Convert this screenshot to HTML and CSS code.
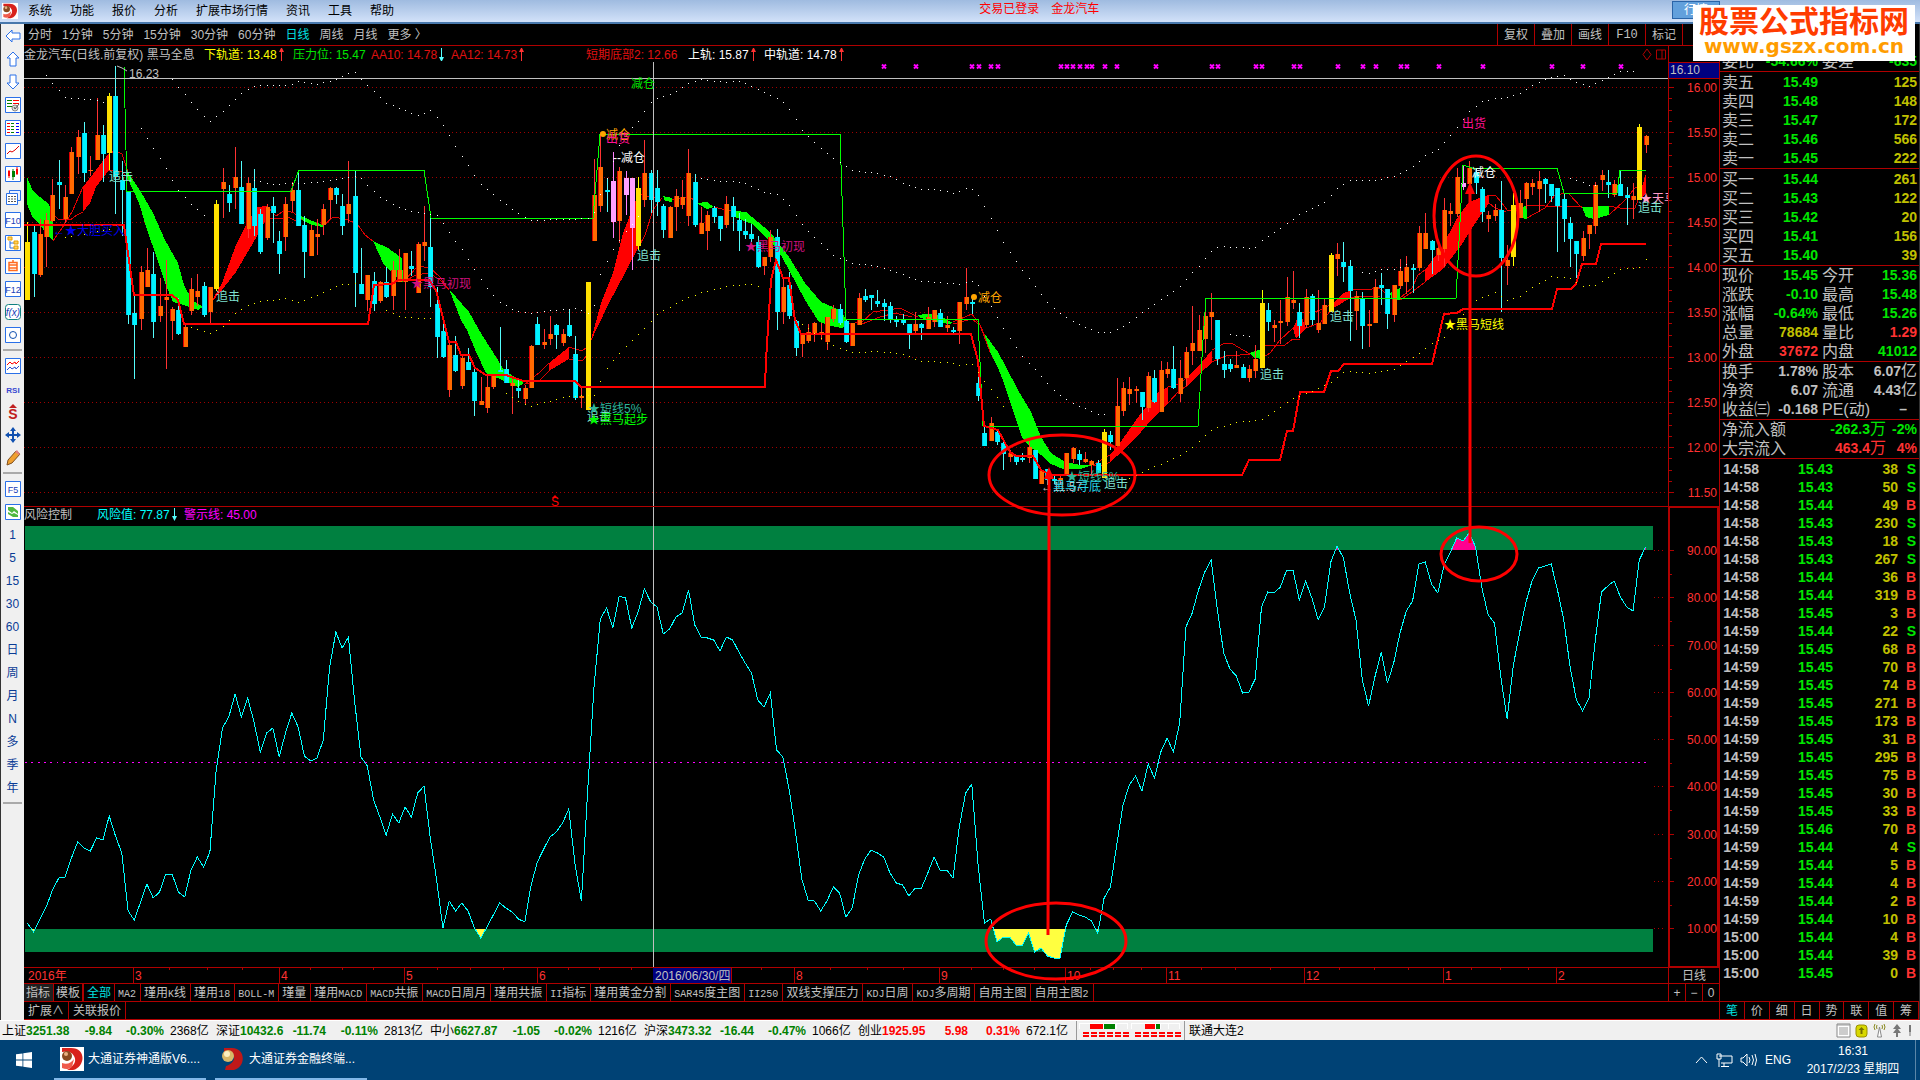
FILE: index.html
```html
<!DOCTYPE html>
<html lang="zh-CN">
<head>
  <meta charset="UTF-8">
  <title>金龙汽车 日线</title>
  <link rel="stylesheet" href="styles.css">
</head>
<body>
  <header class="menubar">
    <svg class="logo" viewBox="0 0 24 24"><rect width="24" height="24" fill="#fff"/><path d="M2 1h9c16 0 14 19 2 22H7c7-4 10-9 7-14C11 4 7 4 2 5z" fill="#d8221c"/><path d="M2 16c5 2 9 0 12-4l-2 8c-4 3-7 2-10 1z" fill="#ef5a4c"/><circle cx="7" cy="9" r="5" fill="#8a4a20"/><circle cx="6" cy="7" r="2" fill="#e8b080"/></svg>
    <nav class="menus">
      <button>系统</button><button>功能</button><button>报价</button><button>分析</button><button>扩展市场行情</button><button>资讯</button><button>工具</button><button>帮助</button>
    </nav>
    <div class="login"><span>交易已登录</span><span>金龙汽车</span></div>
    <button class="market">行情</button>
  </header>

  <main class="main">
    <aside class="toolbar" id="toolbar"></aside>

    <section class="center">
      <div class="periods">
        <button>分时</button><button>1分钟</button><button>5分钟</button><button>15分钟</button><button>30分钟</button><button>60分钟</button><button class="on">日线</button><button>周线</button><button>月线</button><button>更多 〉</button>
        <div class="tools">
          <button>复权</button><button>叠加</button><button>画线</button><button class="en">F10</button><button>标记</button><button>—</button>
        </div>
      </div>

      <div class="chart">
        <svg id="chart" viewBox="24 46 1695 937" preserveAspectRatio="none"></svg>
        <div class="legend">
          <span>金龙汽车(日线.前复权) 黑马全息</span>
          <span class="yellow">下轨道: 13.48<i class="up"></i></span>
          <span class="lime">压力位: 15.47</span>
          <span class="red">AA10: 14.78<i class="down"></i></span>
          <span class="red">AA12: 14.73<i class="up"></i></span>
          <span class="red">短期底部2: 12.66</span>
          <span class="white">上轨: 15.87<i class="up"></i></span>
          <span class="white">中轨道: 14.78<i class="up"></i></span>
        </div>
      </div>

      <div class="tabs">
        <button class="first">指标</button><button class="second">模板</button><button class="on">全部</button><button><b>MA2</b></button><button>瑾用<b>K</b>线</button><button>瑾用<b>18</b></button><button><b>BOLL-M</b></button><button>瑾量</button><button>瑾用<b>MACD</b></button><button><b>MACD</b>共振</button><button><b>MACD</b>日周月</button><button>瑾用共振</button><button><b>II</b>指标</button><button>瑾用黄金分割</button><button><b>SAR45</b>度主图</button><button><b>II250</b></button><button>双线支撑压力</button><button><b>KDJ</b>日周</button><button><b>KDJ</b>多周期</button><button>自用主图</button><button>自用主图<b>2</b></button>
        <div class="zoom"><button>+</button><button>−</button><button>0</button></div>
      </div>
      <div class="tabs last"><button>扩展∧</button><button>关联报价</button></div>
    </section>

    <aside class="side">
      <div class="stock">600686 金龙汽车</div>
      <table class="quote"><tr><td>委比</td><td class="lime">-54.66%</td><td>委差</td><td class="lime">-635</td></tr></table>
      <table class="quote book" id="asks"></table>
      <table class="quote book" id="bids"></table>
      <table class="quote">
        <tr><td>现价</td><td class="lime">15.45</td><td>今开</td><td class="lime">15.36</td></tr>
        <tr><td>涨跌</td><td class="lime">-0.10</td><td>最高</td><td class="lime">15.48</td></tr>
        <tr><td>涨幅</td><td class="lime">-0.64%</td><td>最低</td><td class="lime">15.26</td></tr>
        <tr><td>总量</td><td class="gold">78684</td><td>量比</td><td class="red">1.29</td></tr>
        <tr><td>外盘</td><td class="red">37672</td><td>内盘</td><td class="lime">41012</td></tr>
      </table>
      <table class="quote">
        <tr><td>换手</td><td>1.78%</td><td>股本</td><td>6.07<em>亿</em></td></tr>
        <tr><td>净资</td><td>6.07</td><td>流通</td><td>4.43<em>亿</em></td></tr>
        <tr><td>收益㈢</td><td>-0.168</td><td>PE(动)</td><td class="dash">–</td></tr>
      </table>
      <table class="quote flow">
        <tr><td>净流入额</td><td class="lime">-262.3<em>万</em></td><td class="lime">-2%</td></tr>
        <tr><td>大宗流入</td><td class="red">463.4<em>万</em></td><td class="red">4%</td></tr>
      </table>
      <table class="ticks" id="ticks"></table>
      <div class="sidetabs"><button class="on">笔</button><button>价</button><button>细</button><button>日</button><button>势</button><button>联</button><button>值</button><button>筹</button></div>
    </aside>
  </main>

  <footer class="status">
    <div class="index down"><span>上证</span><b>3251.38</b><b>-9.84</b><b>-0.30%</b><span>2368亿</span></div>
    <div class="index down"><span>深证</span><b>10432.6</b><b>-11.74</b><b>-0.11%</b><span>2813亿</span></div>
    <div class="index down"><span>中小</span><b>6627.87</b><b>-1.05</b><b>-0.02%</b><span>1216亿</span></div>
    <div class="index down"><span>沪深</span><b>3473.32</b><b>-16.44</b><b>-0.47%</b><span>1066亿</span></div>
    <div class="index rise"><span>创业</span><b>1925.95</b><b>5.98</b><b>0.31%</b><span>672.1亿</span></div>
    <div class="meters">
      <svg width="102" height="14" viewBox="0 0 102 14" shape-rendering="crispEdges">
        <path d="M0 0h49v6H0zM52 0h49v6H52z" fill="#fff"/><path d="M1 1h10v5H1zM38 1h10v5H38zM53 1h13v5H53zM82 1h7v5h-7zM90 1h10v5H90z" fill="#f0f0f0"/>
        <path d="M11 1h13v5H11zM66 1h10v5H66z" fill="red"/><path d="M25 1h11v5H25zM77 1h4v5h-4z" fill="green"/>
        <path d="M4 9.500h47M4 12.500h47M56 9.500h46M56 12.500h46" stroke="red" stroke-width="2" stroke-dasharray="6 2"/>
      </svg>
    </div>
    <span class="server">联通大连2</span>
    <svg class="stateicons" width="80" height="16" viewBox="0 0 80 16">
      <path d="M1 1h13v13H1z" fill="#fff" stroke="#888"/><path d="M1 2h13M3 5h9M3 7h9M3 9h9M3 11h9" stroke="#999"/>
      <rect x="20" y="2" width="11" height="12" rx="3" fill="#d8d800" stroke="#998f00"/><path d="M25.500 4l3 3h-2v4h-2V7h-2z" fill="#776f00"/>
      <path d="M39 1q-2 3 0 6M48 1q2 3 0 6M41 2q-1 2 0 4M46 2q1 2 0 4" fill="none" stroke="#8a8a20"/><path d="M43.500 4l-2 10h4z" fill="#fff" stroke="#888"/>
      <path d="M61 1l4 5h-3l3 4h-3v4h-2v-4h-3l3-4h-3z" fill="#777"/><path d="M73 2h2v7h-2zM73.500 9h1v4h-1z" fill="#777"/>
    </svg>
  </footer>

  <footer class="taskbar">
    <button class="start" aria-label="开始"><svg width="16" height="16" viewBox="0 0 16 16" fill="#fff"><path d="M0 2.300L6.500 1.400v6.200H0zM7.300 1.300L16 0v7.600H7.300zM0 8.400h6.500v6.200L0 13.700zM7.300 8.400H16V16l-8.700-1.300z"/></svg></button>
    <button class="task"><svg width="24" height="24" viewBox="0 0 24 24"><rect width="24" height="24" fill="#fff"/><path d="M2 1h9c16 0 14 19 2 22H7c7-4 10-9 7-14C11 4 7 4 2 5z" fill="#d8221c"/><path d="M2 16c5 2 9 0 12-4l-2 8c-4 3-7 2-10 1z" fill="#ef5a4c"/><circle cx="7" cy="9" r="5" fill="#8a4a20"/><circle cx="6" cy="7" r="2" fill="#e8b080"/></svg>大通证券神通版V6....</button>
    <button class="task"><svg width="24" height="24" viewBox="0 0 24 24"><path d="M3 1h8c14 0 14 19 2 22H4l1-4c7-2 10-8 7-12C10 4 7 4 3 5z" fill="#c01818"/><circle cx="7" cy="9" r="6" fill="#d8b868"/><circle cx="6" cy="7" r="3" fill="#fbf0c0"/></svg>大通证券金融终端...</button>
    <div class="tray">
      <svg width="62" height="18" viewBox="0 0 62 18" fill="none" stroke="#fff">
        <path d="M1 12l5.500-6 5.500 6"/><path d="M24 5h13v7H26M22 3h4v5h-4zM24 8v8M29 12v3M26 15.500h8"/>
        <path d="M46 7h2l4-4v12l-4-4h-2zM54 6q2 3 0 6M57 4q3 5 0 10M60 3q3 6 0 12"/>
      </svg>
      <span>ENG</span>
      <div class="clock"><div>16:31</div><div>2017/2/23 星期四</div></div>
      <div class="desktop"></div>
    </div>
  </footer>

  <div class="banner"><div class="name">股票公式指标网</div><div class="url">www.gszx.com.cn</div></div>
  <script src="script.js"></script>
</body>
</html>
```
FILE: styles.css
```css
* { box-sizing: border-box; }
body {
  margin: 0;
  height: 100vh;
  display: flex;
  flex-direction: column;
  overflow: hidden;
  background: #000;
  color: #c0c0c0;
  font: 12px/16px "Liberation Sans", "Noto Sans CJK SC", sans-serif;
}
button {
  margin: 0;
  padding: 0;
  border: 0;
  background: none;
  color: inherit;
  font: inherit;
  white-space: nowrap;
}
.red { color: #ff3232; }
.lime { color: #00e600; }
.yellow { color: #ff0; }
.gold { color: #c0c000; }
.white { color: #fff; }
.on { color: #00e0e0; }

/* top menu */
.menubar {
  height: 24px;
  display: flex;
  align-items: flex-start;
  background: linear-gradient(#9fbbe0, #d0e0f8 21px);
  border-bottom: 2px solid #4878ac;
  color: #000;
  position: relative;
}
.logo { width: 16px; height: 18px; margin: 2px 0 0 2px; }
.menus { display: flex; gap: 18px; margin: 3px 0 0 10px; }
.login {
  position: absolute;
  left: 51%;
  top: 1px;
  display: flex;
  gap: 12px;
  color: #f00;
}
.market {
  margin: 1px 200px 0 auto;
  width: 48px;
  height: 18px;
  background: #62a0dc;
  border: 1px solid #2a64a8;
  color: #fff;
}

.main { flex: 1; min-height: 0; display: flex; }

/* left toolbar */
.toolbar {
  width: 24px;
  flex: none;
  background: #f0f0f0;
  border-left: 1px solid #333;
  display: flex;
  flex-direction: column;
}
.toolbar button {
  height: 23px;
  flex: none;
  display: flex;
  align-items: center;
  justify-content: center;
  color: #0a3c96;
}
.toolbar hr {
  width: 19px;
  height: 2px;
  flex: none;
  margin: 3px auto;
  border: 0;
  background: #aaa;
}

/* centre */
.center {
  flex: 1;
  min-width: 0;
  display: flex;
  flex-direction: column;
}
.periods {
  height: 22px;
  flex: none;
  display: flex;
  gap: 10px;
  padding-left: 4px;
  border-bottom: 1px solid #b00000;
}
.tools { margin-left: auto; display: flex; }
.tools button { width: 37px; border-left: 1px solid #b00000; }
.en, .tabs b { font: 10px "Liberation Mono", monospace; }
.tools .en { font-size: 12px; }
.chart { flex: 1; min-height: 0; position: relative; }
.chart svg { display: block; width: 100%; height: 100%; }
.chart text { font: 12px "Liberation Sans", "Noto Sans CJK SC", sans-serif; }
.legend {
  position: absolute;
  left: 0;
  top: 1px;
  display: grid;
  grid-template-columns: 180px 89px 78px 80px 135px 102px 76px 100px;
  white-space: nowrap;
}
.legend .red { color: #e01010; }
.legend i {
  display: inline-block;
  width: 5px;
  height: 13px;
  margin-left: 2px;
  vertical-align: -2px;
  background: linear-gradient(#ff3232, #ff3232) center / 1px 100% no-repeat;
}
.legend i::before {
  content: "";
  display: block;
  border: 2px solid transparent;
  border-top: 0;
  border-bottom: 4px solid #ff3232;
}
.legend .down { background-image: linear-gradient(#5ff, #5ff); padding-top: 9px; }
.legend .down::before { border-bottom: 0; border-top: 4px solid #5ff; }

.tabs {
  height: 18px;
  flex: none;
  display: flex;
  border-top: 1px solid #b00000;
}
.tabs button {
  padding: 0 3px;
  border-right: 1px solid #b00000;
}
.tabs button:nth-child(n+4) { padding-right: 4px; }
.tabs .first { background: #202020; padding: 0 3px 0 2px; }
.tabs .second { padding: 0 2px; border-right-width: 2px; }
.tabs.last { height: 19px; border-bottom: 1px solid #b00000; }
.last button { padding: 0 4px; }
.zoom {
  margin-left: auto;
  width: 51px;
  display: flex;
  border-left: 1px solid #b00000;
}
.zoom button { flex: 1; }
.zoom button:last-child { border-right: 0; }

/* quote panel */
.side {
  width: 201px;
  flex: none;
  display: flex;
  flex-direction: column;
  border-left: 1px solid #b00000;
  border-right: 1px solid #333;
}
.stock { height: 28px; padding: 4px; }
table { border-collapse: collapse; }
.quote {
  width: 199px;
  table-layout: fixed;
  border-bottom: 1px solid #b00000;
  font-size: 16px;
}
.quote td {
  height: 19px;
  padding: 0 0 0 2px;
  line-height: 19px;
  white-space: nowrap;
}
.quote td:last-child { padding-right: 2px; }
.book { margin-top: 1px; }
.quote td:nth-child(1) { width: 34px; }
.quote td:nth-child(2) { width: 64px; }
.quote td:nth-child(3) { width: 36px; padding-left: 4px; }
.quote td:nth-child(even),
.book td:nth-child(3),
.flow td:nth-child(3) {
  font: bold 14px/19px "Liberation Sans", "Noto Sans CJK SC", sans-serif;
  text-align: right;
}
.book td:nth-child(3) { width: auto; }
.quote td.dash { padding-right: 12px; }
.flow td:nth-child(1) { width: 70px; }
.flow td:nth-child(2) { width: 96px; }
.flow td:nth-child(3) { width: auto; }
.quote em { font: 16px/0 "Noto Sans CJK SC", sans-serif; }
.ticks { width: 196px; font: bold 14px/18px "Liberation Sans", sans-serif; margin-top: 1px; }
.ticks td { height: 18px; padding: 0; text-align: right; }
.ticks td:nth-child(1) { width: 39px; }
.ticks td:nth-child(2) { width: 74px; }
.ticks td:nth-child(3) { width: 65px; }
.sidetabs {
  height: 19px;
  margin-top: auto;
  display: flex;
  border: 1px solid #b00000;
  border-left: 0;
}
.sidetabs button { flex: 1; }
.sidetabs button + button { border-left: 1px solid #b00000; }

/* index strip */
.status {
  height: 20px;
  flex: none;
  display: flex;
  align-items: center;
  padding-left: 2px;
  background: #f0f0f0;
  border-top: 1px solid #fff;
  color: #000;
}
.index {
  display: grid;
  grid-template-columns: 24px 50px 36px 52px 52px;
  white-space: nowrap;
}
.index b:nth-child(n+3) { text-align: right; }
.index span:last-child { padding-left: 6px; }
.status .down b { color: #008000; }
.status .rise b { color: #f00; }
.meters {
  width: 109px;
  height: 19px;
  margin-left: 4px;
  padding: 2px 0 0 2px;
  border-left: 1px solid #999;
  border-right: 1px solid #999;
}
.server { margin-left: 4px; }
.stateicons { margin: 0 4px 0 auto; }

/* desktop taskbar */
.taskbar {
  height: 40px;
  flex: none;
  display: flex;
  background: #004275;
  color: #fff;
}
.start { width: 48px; }
.start svg { display: block; margin: auto; }
.task {
  width: 152px;
  margin-left: 6px;
  padding-left: 6px;
  display: flex;
  align-items: center;
  gap: 4px;
  border-bottom: 2px solid #82b8e8;
}
.task + .task { margin-left: 9px; }
.tray {
  margin-left: auto;
  display: flex;
  align-items: center;
  gap: 8px;
}
.clock { width: 108px; text-align: center; line-height: 18px; }
.desktop { width: 5px; height: 40px; border-left: 1px solid #5a86a8; }

.banner {
  position: absolute;
  top: 5px;
  right: 5px;
  width: 222px;
  height: 56px;
  background: #fff;
  text-align: center;
  font-weight: bold;
  white-space: nowrap;
}
.name { font-size: 30px; line-height: 33px; color: #ff3c00; }
.url { font: bold 20px/16px "DejaVu Sans", sans-serif; color: #ff9c00; }
```
FILE: script.js
```js
// One candle per trading day: type high open-close-top open-close-bottom low
// o = up, c = down, y = chase signal, p = sell signal
const candles = `
y 222 242 300 300|c 224 232 274 297|o 219 234 275 277|o 213 220 237 267|o 179 195 221 222|c 160 182 185 209|o 185 197 219 223|o 147 152 194 194
o 130 137 157 174|c 122 133 173 182|o 156 170 171 176|o 98 135 160 160|c 125 135 154 182|y 93 96 153 170|c 66 96 177 214|c 161 180 190 236
c 191 191 315 324|c 295 313 325 379|o 266 272 319 330|o 248 270 287 287|c 252 274 322 338|o 278 306 316 322|o 260 297 300 369|o 307 309 321 340
c 298 310 334 335|o 325 327 347 347|o 278 289 311 315|o 274 291 297 306|c 282 286 315 317|o 287 287 312 323|y 200 204 289 291|o 168 182 189 218
c 185 194 203 212|o 147 177 188 209|c 161 187 224 224|o 177 183 229 238|c 169 188 226 236|c 209 214 252 254|o 204 207 238 240|c 197 206 213 243
c 231 241 254 274|o 197 204 237 251|o 182 190 201 212|c 171 190 226 226|c 216 225 252 278|o 225 230 256 256|o 219 234 237 255|o 204 209 225 235
o 187 188 200 219|c 187 188 195 204|c 194 206 226 235|o 161 204 214 223|c 170 196 273 307|c 248 284 294 294|o 275 275 300 311|c 272 281 304 311
o 281 282 301 303|c 267 282 297 298|o 261 270 296 310|o 249 270 282 282|o 253 253 282 310|c 251 266 269 276|o 242 244 293 293|o 206 242 246 261
c 217 247 287 307|c 287 304 337 358|c 322 331 357 358|o 340 345 390 397|c 336 355 371 372|o 356 358 386 389|c 348 362 370 370|c 367 372 401 416
o 377 401 405 405|o 376 387 408 413|o 374 376 387 389|c 327 370 372 372|c 360 369 383 383|o 379 383 386 414|c 378 388 391 398|o 385 388 399 405
o 345 346 388 388|c 317 324 345 345|o 329 342 345 349|o 316 334 339 345|c 324 325 335 349|o 329 334 343 346|c 310 325 336 337|c 336 354 398 400
o 387 396 398 408|y 282 282 410 410|o 159 195 241 241|o 134 167 206 212|c 179 190 192 212|p 152 181 222 238|o 167 171 221 243|p 171 178 195 215
p 178 178 228 270|y 177 188 246 250|o 140 173 200 207|c 170 173 200 213|c 170 188 202 216|c 204 206 230 238|o 206 207 238 238|o 189 196 207 231
o 180 197 205 209|o 149 173 216 226|c 174 182 225 227|o 207 223 234 234|o 211 215 231 250|c 206 208 217 223|c 216 216 229 241|o 196 204 225 228
c 197 206 217 231|c 213 220 231 251|c 219 231 235 239|c 224 234 239 242|c 236 242 267 268|o 257 257 266 275|o 230 237 257 262|c 229 237 312 330
o 278 287 312 324|c 272 285 316 319|c 320 321 348 356|o 333 335 344 357|o 324 332 341 343|o 322 323 333 342|o 323 332 335 340|o 317 317 342 350
o 305 309 319 322|c 304 309 323 325|c 319 321 342 343|o 323 323 346 346|o 293 298 325 325|c 289 296 300 302|c 295 295 298 310|c 290 301 304 307
c 299 303 307 321|c 302 306 320 323|c 316 319 322 327|c 314 319 323 325|c 324 324 334 349|o 312 324 331 333|c 323 324 328 340|o 307 317 329 329
o 310 310 322 327|c 309 313 327 327|o 316 325 328 332|c 327 330 332 335|o 302 302 331 344|o 268 297 304 310|c 299 302 304 314|c 359 383 396 401
c 426 433 446 446|o 417 423 441 441|c 429 432 442 445|c 441 443 454 470|o 450 453 457 462|c 456 456 462 465|c 453 458 460 462|o 440 447 458 463
c 450 450 479 479|o 469 470 484 484|c 469 469 480 485|c 474 479 481 484|o 475 478 481 485|o 453 453 476 476|o 447 448 459 463|c 450 454 460 465
o 452 459 462 463|o 460 461 465 474|c 460 463 473 473|y 429 432 478 478|c 431 435 442 450|o 378 406 446 446|o 382 388 411 416|o 377 389 394 405
o 386 389 391 403|c 392 392 407 420|o 372 376 408 412|c 370 378 402 403|o 361 370 412 412|o 362 369 374 378|c 346 369 388 389|o 360 378 394 402
o 347 352 378 386|o 306 343 351 365|o 315 330 351 351|o 300 316 339 353|o 293 312 317 340|c 320 320 359 365|c 351 364 370 378|c 359 364 369 372
o 351 365 368 368|c 364 367 378 378|o 365 369 378 382|o 345 359 371 378|y 290 303 368 368|c 303 310 322 331|o 320 325 328 342|o 300 321 323 344
o 277 297 322 326|o 271 300 303 309|c 303 312 326 338|o 289 297 325 328|c 294 296 320 325|o 290 323 330 333|o 299 305 324 324|y 253 255 312 312
o 243 254 259 276|c 242 262 267 282|c 260 266 291 341|o 291 296 311 330|c 292 298 326 349|o 310 324 326 347|o 279 287 323 323|c 273 285 288 305
c 289 289 314 329|o 285 285 315 322|o 259 271 286 289|o 256 267 282 294|c 264 268 270 293|o 226 233 268 271|o 213 233 249 249|c 240 241 250 274
o 245 248 255 261|o 198 210 249 267|o 203 211 214 226|o 168 177 214 217|p 165 183 187 190|o 161 168 184 192|c 168 172 183 194|c 187 189 212 222
o 211 215 219 232|o 204 210 216 221|c 181 210 258 312|o 245 260 266 285|y 193 205 257 266|o 190 203 218 218|o 182 183 199 209|o 179 183 187 195
o 171 181 189 212|c 178 179 184 203|c 184 184 196 202|c 188 188 206 252|c 193 199 219 242|c 217 223 239 267|c 241 241 254 278|o 231 238 256 261
o 225 225 234 249|o 182 185 226 234|o 170 175 180 191|c 170 182 185 198|o 180 184 195 197|c 170 184 196 196|c 187 195 198 225|o 183 196 200 219
y 124 127 200 200|o 135 136 145 153`.trim().split(/[\n|]/).map(s => s.split(" "));

// risk line, y position per day
const risk = [
  923,932,919,907,890,878,877,858,842,848,851,838,840,816,836,853,911,920,902,884,898,892,874,874,892,897,870,857,867,852,
  770,728,717,694,717,698,722,752,733,728,757,733,713,727,756,761,758,740,667,632,648,637,702,757,766,800,817,835,814,823,
  807,817,793,786,838,880,928,901,911,903,911,928,938,927,915,903,908,912,919,922,885,862,849,837,832,823,809,865,901,790,
  687,619,608,628,596,598,628,612,589,602,607,634,629,617,613,590,625,637,638,640,651,637,640,652,663,673,700,707,693,750,
  757,790,832,879,900,901,911,901,887,893,917,908,875,859,850,853,857,873,883,885,896,888,888,873,857,871,870,878,827,793,
  784,865,923,919,942,937,937,945,946,933,952,948,956,958,958,925,912,915,917,921,933,898,887,845,805,785,776,791,764,778,
  752,738,752,723,627,613,590,572,560,610,653,669,676,693,692,679,607,592,593,587,570,570,600,581,598,620,607,562,546,558,
  593,620,680,706,677,652,683,663,633,611,601,564,562,584,593,565,552,538,541,533,547,588,615,623,677,719,665,632,602,580,
  568,566,564,590,620,667,700,711,698,640,592,586,581,597,607,611,560,547
];

const greenFills = [
  "27,177 33,191 40,197 49,204 53,216 53,241 46,233 40,225 33,218 27,204",
  "127,171 141,192 153,213 165,240 178,263 184,285 192,300 203,307 198,310 184,305 173,302 165,283 157,258 147,230 139,203 127,177",
  "299,215 310,220 323,225 323,227 312,225 302,220",
  "373,241 388,248 402,258 403,282 392,273 384,265",
  "449,289 469,312 482,335 498,360 504,370 524,383 518,387 500,379 486,373 476,352 467,330 461,320",
  "663,196 672,198 672,202 665,201",
  "697,203 707,202 714,207 707,209",
  "735,211 746,212 758,222 771,233 789,257 805,283 821,302 840,310 849,323 842,328 831,326 819,322 805,300 789,270 778,250 764,235 752,224 735,217",
  "917,315 927,314 938,315 953,323 948,324 938,322 921,318",
  "984,333 998,352 1006,367 1018,390 1031,412 1041,437 1051,453 1065,462 1080,465 1093,465 1080,469 1063,469 1051,464 1041,455 1029,446 1022,437 1014,413 1004,383 998,368 990,352",
  "1249,353 1262,349 1262,359 1255,358",
  "1390,293 1400,288 1400,300 1392,300",
  "1516,210 1527,205 1527,219 1520,218",
  "1582,207 1609,206 1609,215 1594,219 1586,217"
];
const redFills = [
  "83,187 96,170 109,153 109,170 96,187 90,203 83,212",
  "210,304 222,283 236,245 247,223 257,207 267,206 267,218 253,243 236,272 222,290",
  "549,363 569,347 569,359 549,371",
  "591,340 601,303 613,273 623,233 636,200 638,248 625,273 609,303 597,328 586,352",
  "1110,455 1122,440 1136,420 1149,403 1157,393 1168,387 1168,403 1153,418 1141,432 1124,450 1110,462",
  "1187,377 1202,362 1212,350 1212,363 1200,373 1187,386",
  "1293,328 1300,313 1306,328 1296,339",
  "1333,303 1343,293 1350,291 1350,298 1339,305 1333,308",
  "1425,270 1442,247 1456,220 1468,203 1481,197 1489,195 1489,203 1476,222 1460,247 1442,270 1425,282",
  "1642,187 1646,173 1646,193 1641,198"
];
const thinReds = [
  "53,241 62,228 72,212 83,187", "50,212 58,219 70,220 77,215 83,212",
  "109,153 116,151 122,154 128,172", "109,170 122,172 128,178",
  "267,206 276,216 285,210 294,213 302,220", "267,218 279,219 288,217 298,222",
  "323,226 333,217 345,219 353,222 358,225 365,235 373,241",
  "403,282 418,266 430,268 440,277 449,290", "403,282 416,275 429,273 440,280 449,290",
  "524,385 540,372 549,363", "527,384 540,380 549,371", "569,347 582,351 590,345", "569,359 582,361 590,352",
  "636,193 645,196 660,198", "638,248 645,235 653,210 662,198", "672,200 690,197 697,203", "714,207 722,209 735,211",
  "849,324 862,322 873,312 888,310 900,308 910,313 918,317", "862,324 880,317 895,313 912,317",
  "953,322 972,314 980,325 985,336", "953,324 972,319 980,325 990,352",
  "1093,465 1103,459 1110,455", "1093,466 1103,465 1110,462",
  "1168,387 1180,384 1187,377", "1168,403 1180,390 1187,386",
  "1212,350 1225,343 1233,344 1243,350 1250,354", "1212,362 1228,355 1240,355 1250,354",
  "1262,346 1285,345 1293,339 1300,339", "1262,358 1270,353 1280,340 1293,328",
  "1300,313 1315,312 1325,308 1333,303", "1306,328 1320,323 1333,308",
  "1350,291 1355,289 1370,290 1377,287 1390,296", "1350,298 1365,296 1380,297",
  "1400,300 1412,292 1425,282", "1400,298 1412,288 1418,275 1425,270",
  "1489,195 1495,195 1502,203 1507,210 1516,211", "1489,203 1495,208 1506,212",
  "1527,205 1545,206 1560,207 1582,206", "1527,218 1545,208 1555,195 1568,193 1582,208",
  "1609,206 1625,209 1635,208 1642,190", "1609,215 1625,200 1635,188 1642,185"
];
const support = "24,225 124,225 134,295 172,295 178,300 184,324 368,324 374,285 392,284 398,280 429,280 436,290 449,342 456,342 461,355 469,355 475,368 486,375 506,375 514,378 524,381 575,381 581,387 765,387 766,360 771,280 776,260 783,278 789,278 795,320 801,334 971,334 978,361 984,426 998,430 1010,452 1016,456 1033,456 1041,470 1051,475 1242,475 1249,460 1280,460 1287,431 1293,431 1300,392 1324,392 1331,371 1338,371 1344,364 1432,364 1444,314 1457,313 1463,309 1552,309 1557,289 1571,289 1576,284 1582,264 1596,264 1601,244 1646,244";
const pressure = "124,66 127,191 291,191 299,170 424,170 431,218 593,218 600,134 840,134 846,319 978,319 983,426 1198,426 1203,340 1206,298 1456,298 1463,165 1472,168 1557,168 1564,193 1617,193 1620,170 1646,170";

// dotted bands: corner points, a dot is drawn for every day between them
const bands = [
  ["#fff", "46,75 53,84 65,97 90,99 104,102"],
  ["#fff", "172,79 191,102 209,122 222,111 241,93 255,85 290,85 298,81 316,84 336,79 354,71 367,85 386,103 418,115 431,110 443,125 461,155 480,183 500,200 518,213 531,220 592,218 600,195 619,145 631,128 638,121 650,103 657,98 675,92 690,82 700,79 725,82 740,81 755,87 765,93 780,99 790,110 802,130 815,143 830,156 845,165 853,171 870,172 890,176 905,184 922,189 935,189 955,193 965,188 975,189 985,207 1005,245 1015,260 1030,280 1050,305 1062,315 1080,325 1098,332 1110,332 1125,325 1143,311 1160,300 1179,287 1199,265 1212,250 1219,246 1238,247 1254,248 1262,240 1280,228 1298,215 1325,202 1337,188 1349,180 1373,180 1395,176 1412,167 1425,155 1438,149 1450,136 1457,127 1470,110 1482,101 1495,98 1507,97 1519,93 1538,82 1551,77 1564,75 1576,82 1590,86 1601,80 1621,71 1634,71"],
  ["#fff", "135,119 153,148 165,167 178,190 192,205 209,219"],
  ["#fff", "253,180 273,184 318,182 341,178 359,175 367,185 380,197 400,208 420,213 437,215 449,232 461,248 473,267 486,287 500,302 514,310 531,313 551,310 576,308 592,315 600,275 612,250 625,232 640,214"],
  ["#fff", "701,178 723,181 744,182 764,192 776,193 789,205 801,223 815,238 833,255 852,263 878,266 907,276 923,281 960,284 971,280 978,285 997,317 1009,337 1022,356 1041,376 1053,390 1073,403 1098,414 1110,414"],
  ["#fff", "1224,334 1250,336"], ["#fff", "1357,271 1369,273 1381,269 1395,269 1412,262"], ["#fff", "1564,176 1590,185 1600,185"],
  ["#ff0", "64,237 83,234 100,230 115,228"],
  ["#ff0", "191,327 209,333 222,327 235,313 247,305 261,301 286,298 298,302 322,293 337,285 355,283"],
  ["#ff0", "380,307 400,317 431,318"], ["#ff0", "500,389 518,401 531,406 567,396 594,395 606,369 619,353 644,328 657,314 682,300 701,292 731,285 752,284 764,289"],
  ["#ff0", "801,323 827,343 852,352 878,351 903,354 920,361 949,362 961,365 971,363 984,380 1002,403 1009,417"],
  ["#ff0", "1129,478 1153,467 1180,455 1192,447 1212,429 1237,422 1261,419 1274,411 1293,398 1312,391 1331,382 1344,371 1369,373 1394,369 1412,358 1431,343 1444,337 1463,314 1476,300 1494,292 1507,300 1519,296 1532,287 1551,276 1570,278 1582,286 1595,285 1620,269 1639,267 1646,259"]
];

const crosses = [884,916,972,979,991,998,1061,1067,1073,1080,1087,1092,1105,1117,1156,1212,1218,1256,1262,1294,1300,1338,1363,1376,1401,1407,1439,1483,1552,1583,1621];

// x, baseline, colour, text
const labels = [
  [129,78,"#c0c0c0","16.23"], [109,181,"#7fe0d0","追击"], [216,301,"#7fe0d0","追击"], [637,260,"#7fe0d0","追击"],
  [1260,379,"#7fe0d0","追击"], [1330,321,"#7fe0d0","追击"], [587,421,"#7fe0d0","追击"],
  [53,235,"#0000e8","←★大胆买入"], [631,88,"#00e600","减仓"], [606,139,"#ffa500","减仓"], [606,143,"#ff1090","出货"],
  [613,162,"#fff","--减仓"], [745,251,"#d0107f","★黑马初现"], [411,288,"#d0107f","★黑马初现"], [978,302,"#ffa500","减仓"],
  [1462,128,"#ff1090","出货"], [1472,177,"#fff","减仓"], [1444,329,"#ff0","★黑马短线"], [1640,203,"#ff9ac8","★天马"],
  [1638,212,"#7fe0d0","追击"], [588,413,"#2fb59a","★短线5%"], [588,424,"#00ff00","★黑马起步"],
  [1066,481,"#2fb59a","★短线5%"], [1041,491,"#c0c0c0","←11.57"], [1053,491,"#2ad8e8","黑马寻底"], [1104,488,"#7fe0d0","追击"]
];

const step = 6.297;
const dayX = i => 27.3 + step * i;
const red = "#b00000";
let s = "";
const rect = (x, y, w, h, fill) => { s += `<rect x="${x}" y="${y}" width="${w}" height="${h}" fill="${fill}"/>`; };
const line = (pts, stroke, w = 1, extra = "") => { s += `<polyline points="${pts}" fill="none" stroke="${stroke}" stroke-width="${w}" ${extra}/>`; };
const text = (x, y, fill, t, extra = "") => { s += `<text x="${x}" y="${y}" fill="${fill}" ${extra}>${t}</text>`; };

s += `<defs><clipPath id="plot"><rect x="24" y="46" width="1644" height="937"/></clipPath>
<clipPath id="low"><rect x="24" y="929" width="1629" height="38"/></clipPath>
<clipPath id="high"><rect x="24" y="507" width="1629" height="43"/></clipPath></defs>`;
s += `<g shape-rendering="crispEdges">`;

// price grid and scale
for (let i = 0; i < 10; i++) {
  const y = 87 + 45 * i;
  line(`24,${y}.5 1668,${y}.5`, "#a00000", 1, `stroke-dasharray="1 3"`);
  rect(1669, y, 5, 1, red);
  for (let k = 1; k < 4 && i < 9; k++) rect(1669, y + Math.round(k * 11.25), 3, 1, red);
}
// risk scale
for (let i = 0; i < 9; i++) {
  const y = 550 + Math.round(47.25 * i);
  rect(1669, y, 5, 1, red);
  rect(1654, y, 1, 1, red); rect(1658, y, 1, 1, red); rect(1662, y, 1, 1, red);
  if (i < 8) rect(1669, y + 24, 3, 1, red);
}
rect(24.5, 526, 1628.5, 24, "#008040");
rect(24.5, 929, 1628.5, 23, "#008040");
line("25,762.5 1646,762.5", "#ff00ff", 1, `stroke-dasharray="2 4.3"`);

for (const p of greenFills) s += `<polygon points="${p}" fill="#0f0"/>`;
for (const p of redFills) s += `<polygon points="${p}" fill="#f00"/>`;
for (const p of thinReds) line(p, "#e00000");

candles.forEach((c, i) => {
  const x = Math.round(dayX(i)) - 2;
  const [type, high, top, bottom, low] = [c[0], +c[1], +c[2], +c[3], +c[4]];
  const wick = { o: "#ff3232", c: "#54fcfc", y: "#ffff00", p: "#ff80ff" }[type];
  const body = { o: "#ff6a00", c: "#00f4ff", y: "#ffe000", p: "#ffa0ff" }[type];
  rect(x + 2, high, 1, Math.max(low - high, 1), wick);
  rect(x, top, 5, Math.max(bottom - top, 1), body);
  if (type == "o") rect(x, top, 1, Math.max(bottom - top, 1), "#e00000");
  if (type == "c") rect(x, top, 1, Math.max(bottom - top, 1), "#00c8f0");
});

line(pressure, "#0f0");
line(support, "#f00", 2);

for (const [color, str] of bands) {
  const p = str.split(" ").map(v => v.split(",").map(Number));
  for (let i = 0; i < 258; i++) {
    const x = dayX(i);
    const k = p.findIndex((q, n) => n && p[n - 1][0] <= x && x <= q[0]);
    if (k < 0) continue;
    const y = p[k - 1][1] + (p[k][1] - p[k - 1][1]) * (x - p[k - 1][0]) / (p[k][0] - p[k - 1][0]);
    rect(Math.round(x), Math.round(y), 1, 1, color);
  }
}

// risk line and the areas past its limits
const riskPts = risk.map((y, i) => dayX(i).toFixed(1) + "," + y).join(" ");
s += `<polygon clip-path="url(#low)" points="27,929 ${riskPts} 1646,929" fill="#ffff40"/>`;
s += `<polygon clip-path="url(#high)" points="27,550 ${riskPts} 1646,550" fill="#ff0090"/>`;
line(riskPts, "#00ffff");

// crosshair
rect(24, 78, 1644, 1, "#c0c0c0");
rect(653, 62, 1, 905, "#c0c0c0");

// frames
rect(24, 506, 1695, 1, red);
rect(24, 967, 1695, 1, red);
rect(1668, 46, 1, 937, red);
s += `<rect x="1669" y="507" width="49" height="460" fill="none" stroke="${red}" stroke-width="2"/>`;
rect(1669, 62, 50, 1, red);
rect(1669, 63, 50, 15, "#000080");
rect(1669, 78, 50, 1, red);

// time axis
for (const [x, t] of [[133,"3"],[279,"4"],[404,"5"],[537,"6"],[794,"8"],[939,"9"],[1065,"10"],[1166,"11"],[1304,"12"],[1443,"1"],[1556,"2"]]) {
  rect(x, 967, 1, 16, red);
  text(x + 2, 980, "#ff3232", t);
}
for (const x of [169,207,242,310,342,373,437,470,503,568,599,631,761,830,867,903,971,1003,1034,1090,1113,1141,1201,1235,1270,1339,1374,1408,1471,1500,1528]) rect(x, 968, 1, 2, red);
rect(653, 968, 78, 15, "#000080");
rect(731, 967, 1, 16, red);
s += `</g><g clip-path="url(#plot)">`;

for (const [x, y, color, t] of labels) text(x, y, color, t);
line("117,66 122,68 127,71", "#c0c0c0");
for (const x of crosses) line(`${x - 2},64.500 ${x + 2},68.500 ${x},66.500 ${x + 2},64.500 ${x - 2},68.500`, "#f0f", 2);
s += `<circle cx="603" cy="134" r="3" fill="#ffa500"/><circle cx="974" cy="297" r="3" fill="#ffa500"/>`;
text(551, 506, "#f00", "S", `font-weight="bold"`);
s += `<path d="M552 498l3-3 3 3z" fill="#f00"/>`;

// hand drawn marks
s += `<g fill="none" stroke="#f00" stroke-width="3"><ellipse cx="1476" cy="216" rx="42" ry="60"/><ellipse cx="1062" cy="475" rx="73" ry="40"/>
<ellipse cx="1479" cy="554" rx="38" ry="27"/><ellipse cx="1056" cy="941" rx="70" ry="38"/>
<path d="M1470 190V543M1049 475V570L1048 935"/></g>
<path d="M1470 182l5 12h-10zM1049 467l5 12h-10z" fill="#f00"/>`;
s += `</g>`;

s += `<path d="M1647 49l4 5.500-4 5.500-4-5.500zM1656.500 50h9v9h-9zM1662 50v9" fill="none" stroke="${red}"/>`;
text(28, 980, "#ff3232", "2016年");
text(655, 980, "#c0c0c0", "2016/06/30/四");
text(1682, 980, "#c0c0c0", "日线");
text(1670, 74, "#c0c0c0", "16.10");
for (let i = 0; i < 10; i++) text(1717, 92 + 45 * i, "#ff3232", (16 - i / 2).toFixed(2), `text-anchor="end"`);
for (let i = 0; i < 9; i++) text(1717, 555 + Math.round(47.25 * i), "#ff3232", (90 - 10 * i).toFixed(2), `text-anchor="end"`);
text(24, 519, "#c0c0c0", "风险控制");
text(97, 519, "#00ffff", "风险值: 77.87");
line("174.5,508 174.500,520", "#54fcfc");
s += `<path d="M172 516h5l-2.500 5z" fill="#54fcfc"/>`;
text(184, 519, "#ff00ff", "警示线: 45.00");
document.getElementById("chart").innerHTML = s;

// order book
const book = (id, side, names, price, vols) => {
  document.getElementById(id).innerHTML = vols.map((v, i) =>
    `<tr><td>${side}${names[i]}</td><td class="lime">${(price - i / 100).toFixed(2)}</td><td class="gold">${v}</td></tr>`).join("");
};
book("asks", "卖", "五四三二一", 15.49, [125, 148, 172, 566, 222]);
book("bids", "买", "一二三四五", 15.44, [261, 122, 20, 156, 39]);

const ticks = "58 43 38 S,58 43 50 S,58 44 49 B,58 43 230 S,58 43 18 S,58 43 267 S,58 44 36 B,58 44 319 B,58 45 3 B,59 44 22 S,59 45 68 B,59 45 70 B,59 45 74 B,59 45 271 B,59 45 173 B,59 45 31 B,59 45 295 B,59 45 75 B,59 45 30 B,59 45 33 B,59 46 70 B,59 44 4 S,59 44 5 B,59 44 4 B,59 44 2 B,59 44 10 B,00 44 4 B,00 44 39 B,00 45 0 B";
document.getElementById("ticks").innerHTML = ticks.split(",").map(t => {
  const [m, p, v, d] = t.split(" ");
  return `<tr><td>${m == "00" ? 15 : 14}:${m}</td><td class="lime">15.${p}</td><td class="gold">${v}</td><td class="${d == "S" ? "lime" : "red"}">${d}</td></tr>`;
}).join("");

// toolbar icons, drawn in a 16x16 box
const box = `<path d="M.5 .5h15v15H.5z" fill="#fff" stroke="#2a70e8"/>`;
const boxText = (t, c = "#1840b8") => box + `<text x="8" y="12" font-size="9" text-anchor="middle" fill="${c}">${t}</text>`;
const icons = [
  `<path d="M1 8l6-6v3h8v6H7v3z" fill="#fff" stroke="#2a70e8"/>`,
  `<path d="M8 1l6 6h-3v8H5V7H2z" fill="#fff" stroke="#2a70e8"/>`,
  `<path d="M8 15l6-6h-3V1H5v8H2z" fill="#fff" stroke="#2a70e8"/>`,
  box + `<path d="M2 3.500h5M2 6.500h5M2 9.500h5" stroke="green"/><path d="M8 3.500h6M8 6.500h6" stroke="red"/><circle cx="10" cy="11" r="3" fill="#ddd" stroke="#888"/><path d="M9 10l1 2 4-5" fill="none" stroke="#555"/>`,
  box + `<path d="M2 3.500h3M2 6.500h3M2 9.500h3M2 12.500h3" stroke="red"/><path d="M6 3.500h3M6 6.500h3M6 9.500h3M6 12.500h3" stroke="green"/><path d="M11 3.500h3M11 6.500h3M11 9.500h3M11 12.500h3" stroke="blue"/>`,
  box + `<path d="M2 11l3-3 2 1 3-2 4-4" fill="none" stroke="#e00000"/>`,
  box + `<path d="M4 4v8M12 1v8" stroke="red"/><path d="M8 3v11" stroke="green"/><path d="M3 5h2v5H3zM11 3h2v5h-2z" fill="red"/><path d="M7 5h3v6H7z" fill="green"/>`,
  `<path d="M4.500 1.500h11v10h-11z" fill="#e8f0ff" stroke="#2a70e8"/><path d="M1.500 4.500h11v11h-11z" fill="#fff" stroke="#2a70e8"/><path d="M3 7.500h8M3 10h8M3 12.500h8" stroke="#555" stroke-dasharray="2 1"/>`,
  boxText("F10"),
  box + `<path d="M5 6v7h5M5 8h5" fill="none" stroke="#2a70e8"/><path d="M3 2h4v3H3zM9 6h4v3H9zM9 11h4v3H9z" fill="#ffd060" stroke="#e8a000"/>`,
  box + `<path d="M4 4.500h8v8H4zM4 7h8M4 10h8M8 2v2" fill="none" stroke="#ff6a20" stroke-width="1.500"/>`,
  boxText("F12"),
  `<rect x=".5" y=".5" width="15" height="15" rx="3" fill="#fff" stroke="#108080"/><text x="8" y="12" font-size="10" font-style="italic" text-anchor="middle" fill="#1840b8">f(x)</text>`,
  box + `<circle cx="8" cy="8" r="3.500" fill="none" stroke="#1050b0"/>`,
  null,
  box + `<path d="M2 7l3-3 2 2 3-2 1 2 3-3" fill="none" stroke="red"/><path d="M2 12l3-3 2 2 3-2 1 2 3-3" fill="none" stroke="#3050d0"/>`,
  `<text x="8" y="12" font-size="8" font-weight="bold" text-anchor="middle" fill="#3a48d0">RSI</text>`,
  `<path d="M8 0l4 4H4z" fill="#c02020"/><text x="8" y="15" font-size="14" font-weight="bold" text-anchor="middle" fill="#c02020">S</text>`,
  `<path d="M8 0l3 4H9v3h3V5l4 3-4 3V9H9v3h2l-3 4-3-4h2V9H4v2L0 8l4-3v2h3V4H5z" fill="#1050b0"/>`,
  `<path d="M2 15l1-5 8-9 4 3-8 9z" fill="#f0a030" stroke="#805020"/><path d="M10 2l4 3 1-1-3-4z" fill="#e08080"/>`,
  null,
  boxText("F5"),
  box + `<path d="M3 3h5l5 4v3l-4-3-2 2-4-3zM13 13H8l-5-3V8l4 2 2-1 4 2z" fill="#50b840"/>`
];
document.getElementById("toolbar").innerHTML =
  icons.map(i => i ? `<button aria-label="工具"><svg width="16" height="16" viewBox="0 0 16 16">${i}</svg></button>` : "<hr>").join("") +
  ["1", "5", "15", "30", "60", "日", "周", "月", "N", "多", "季", "年"].map(t => `<button>${t}</button>`).join("") + "<hr>";
```
